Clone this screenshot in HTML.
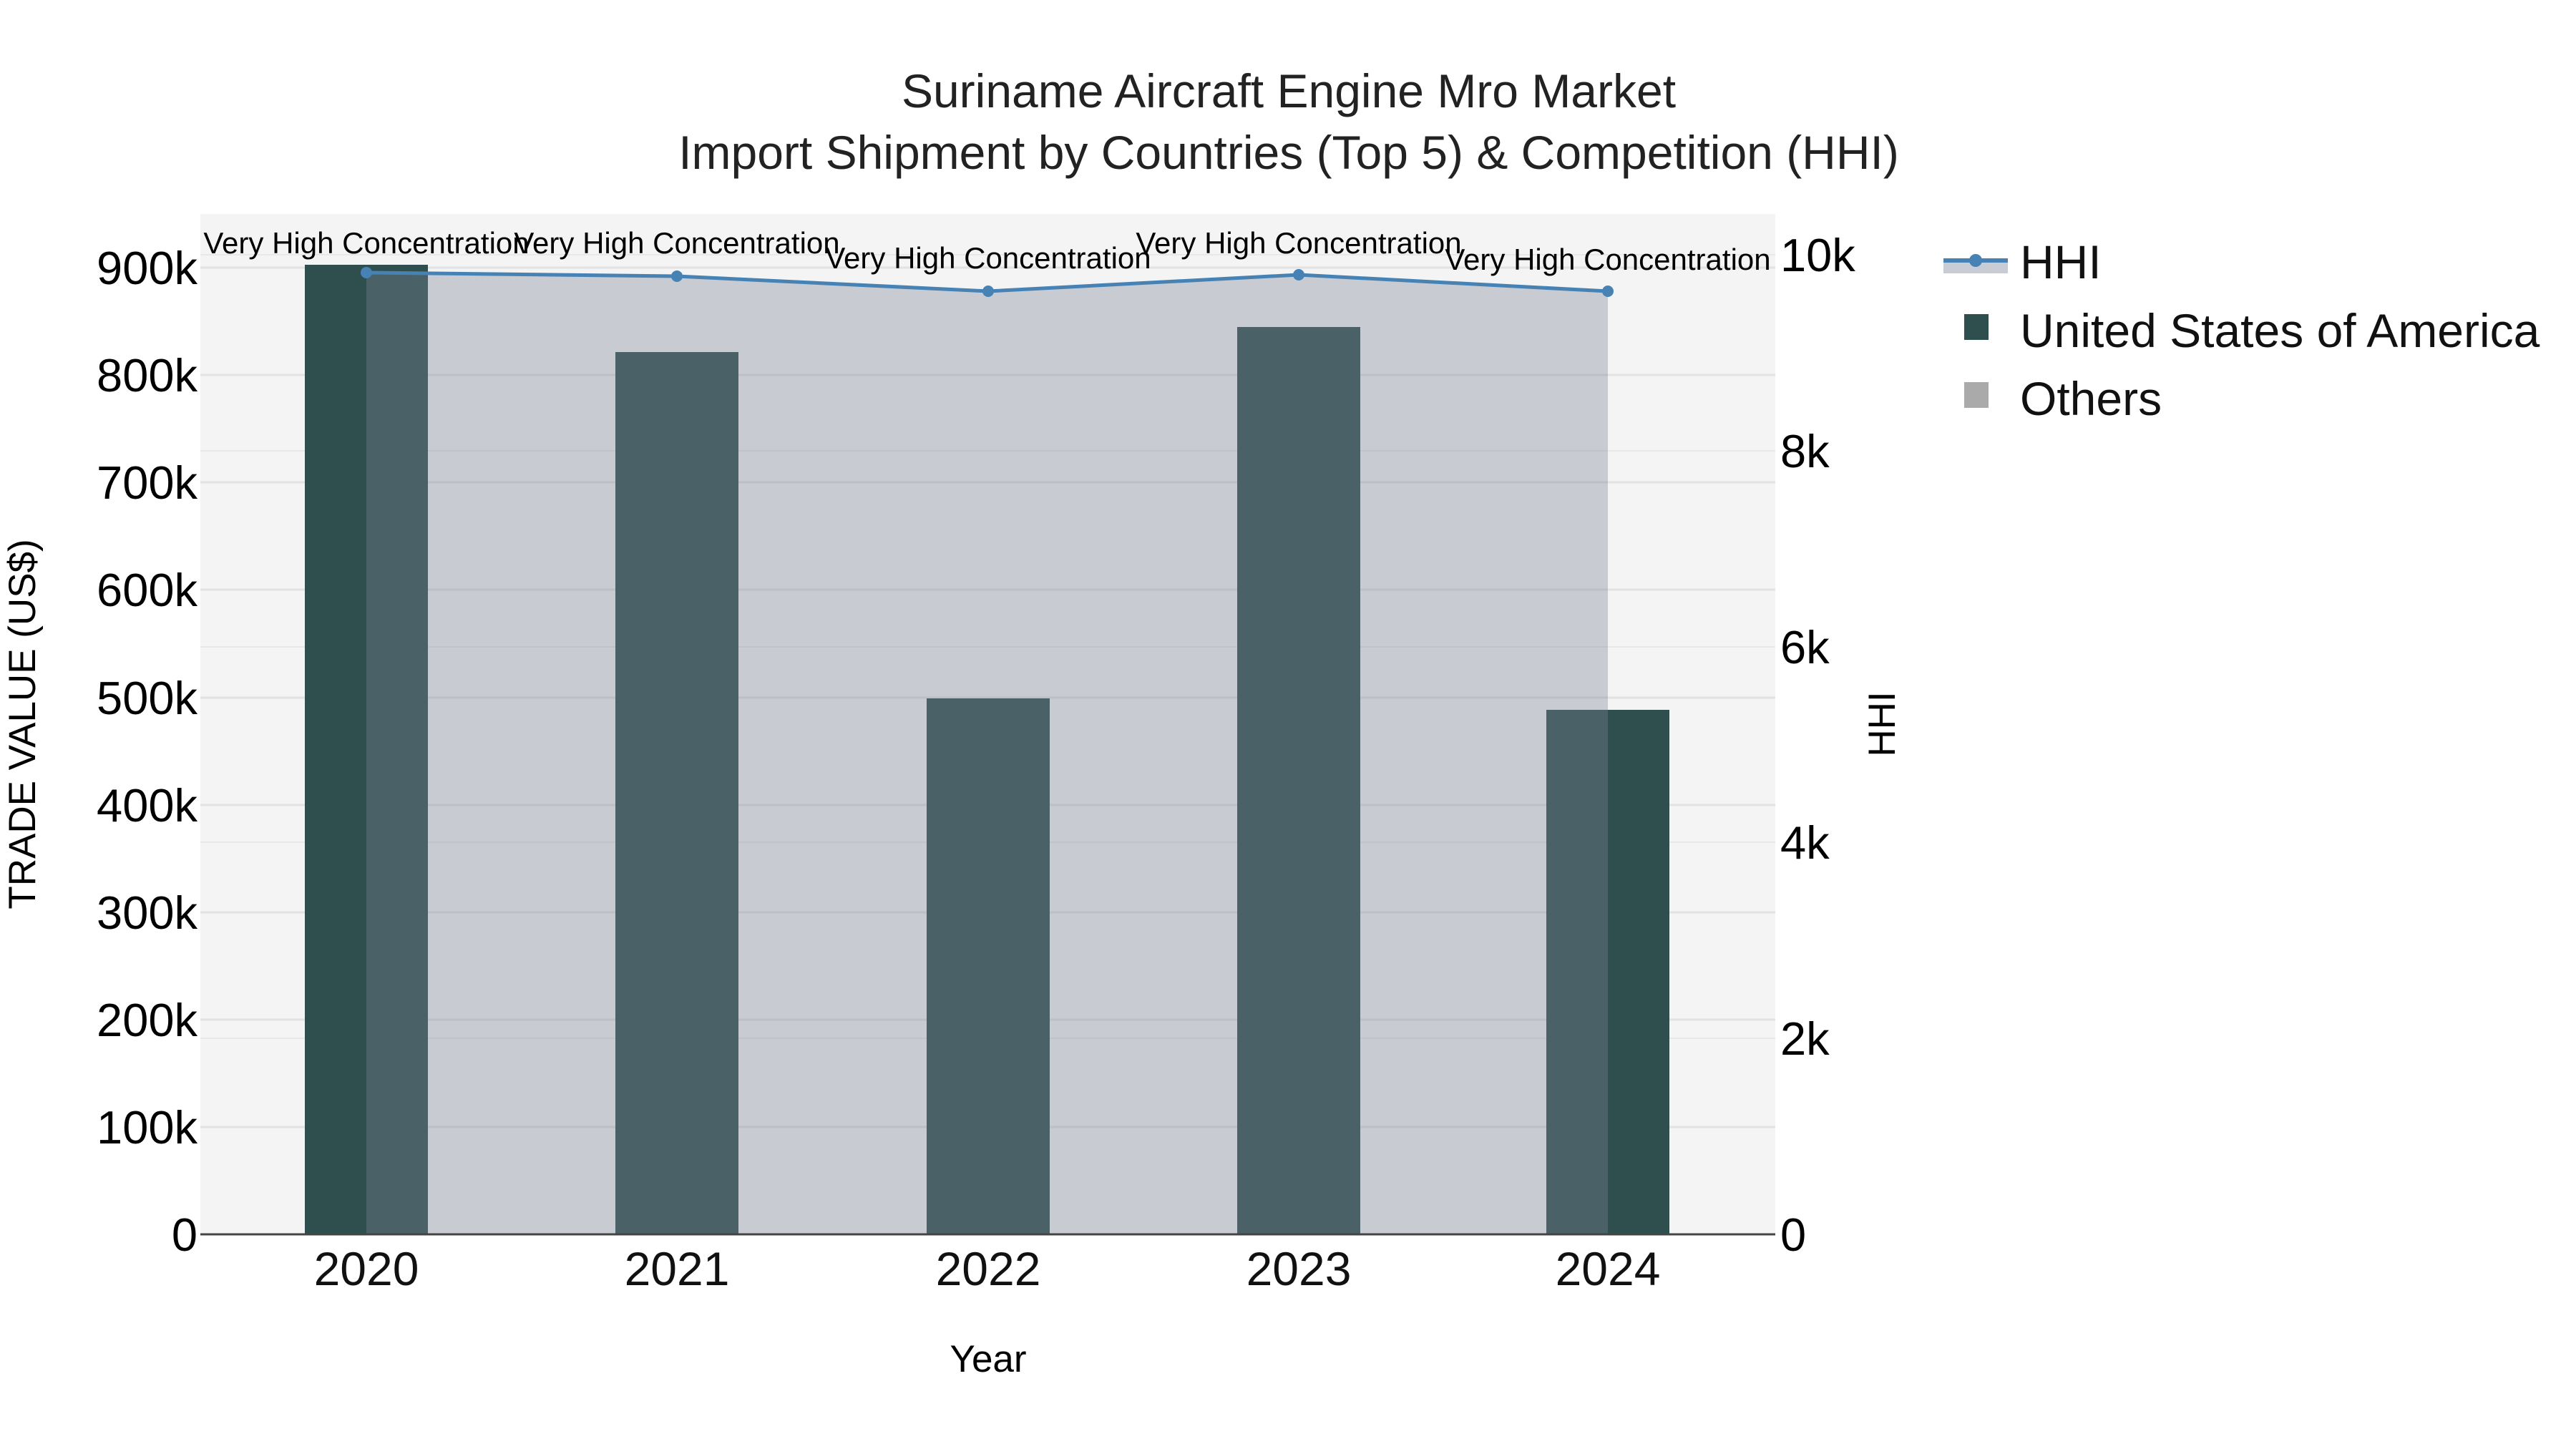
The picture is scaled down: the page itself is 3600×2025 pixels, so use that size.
<!DOCTYPE html>
<html><head><meta charset="utf-8"><style>
html,body{margin:0;padding:0;background:#fff;}
svg{display:block;font-family:"Liberation Sans",sans-serif;}
</style></head><body>
<svg width="3600" height="2025" viewBox="0 0 3600 2025" xmlns="http://www.w3.org/2000/svg">
<rect width="3600" height="2025" fill="#fff"/>
<rect x="280" y="299" width="2201" height="1426" fill="#f4f4f4"/>
<g stroke="#e2e2e2" stroke-width="3">
<line x1="280" x2="2481" y1="1575" y2="1575"/><line x1="280" x2="2481" y1="1425" y2="1425"/>
<line x1="280" x2="2481" y1="1275" y2="1275"/><line x1="280" x2="2481" y1="1125" y2="1125"/>
<line x1="280" x2="2481" y1="975" y2="975"/><line x1="280" x2="2481" y1="824" y2="824"/>
<line x1="280" x2="2481" y1="674" y2="674"/><line x1="280" x2="2481" y1="524" y2="524"/>
<line x1="280" x2="2481" y1="374" y2="374"/>
</g>
<g stroke="#e8e8e8" stroke-width="2">
<line x1="280" x2="2481" y1="1451" y2="1451"/><line x1="280" x2="2481" y1="1177" y2="1177"/>
<line x1="280" x2="2481" y1="904" y2="904"/><line x1="280" x2="2481" y1="630" y2="630"/>
<line x1="280" x2="2481" y1="356" y2="356"/>
</g>
<g fill="#2f4f4f">
<rect x="426" y="370" width="172" height="1355"/>
<rect x="860" y="492" width="172" height="1233"/>
<rect x="1295" y="976" width="172" height="749"/>
<rect x="1729" y="457" width="172" height="1268"/>
<rect x="2161" y="992" width="172" height="733"/>
</g>
<polygon points="512,381 946,386 1381,407 1815,384 2247,407 2247,1725 512,1725" fill="rgba(122,129,151,0.36)"/>
<polyline points="512,381 946,386 1381,407 1815,384 2247,407" fill="none" stroke="#4682b4" stroke-width="5"/>
<g fill="#4682b4">
<circle cx="512" cy="381" r="8"/><circle cx="946" cy="386" r="8"/><circle cx="1381" cy="407" r="8"/><circle cx="1815" cy="384" r="8"/><circle cx="2247" cy="407" r="8"/>
</g>
<line x1="280" x2="2481" y1="1725" y2="1725" stroke="#444" stroke-width="3"/>
<g font-size="42" text-anchor="middle" fill="#000">
<text x="512" y="354">Very High Concentration</text>
<text x="946" y="354">Very High Concentration</text>
<text x="1381" y="375">Very High Concentration</text>
<text x="1815" y="354">Very High Concentration</text>
<text x="2247" y="377">Very High Concentration</text>
</g>
<g font-size="65" text-anchor="end" fill="#000">
<text x="276" y="1748">0</text><text x="276" y="1598">100k</text><text x="276" y="1448">200k</text>
<text x="276" y="1298">300k</text><text x="276" y="1148">400k</text><text x="276" y="998">500k</text>
<text x="276" y="847">600k</text><text x="276" y="697">700k</text><text x="276" y="547">800k</text>
<text x="276" y="397">900k</text>
</g>
<g font-size="65" fill="#000">
<text x="2488" y="1748">0</text><text x="2488" y="1474">2k</text><text x="2488" y="1200">4k</text>
<text x="2488" y="927">6k</text><text x="2488" y="653">8k</text><text x="2488" y="379">10k</text>
</g>
<g font-size="66" text-anchor="middle" fill="#111">
<text x="512" y="1796">2020</text><text x="946" y="1796">2021</text><text x="1381" y="1796">2022</text>
<text x="1815" y="1796">2023</text><text x="2247" y="1796">2024</text>
</g>
<text x="1381" y="1917" font-size="53" text-anchor="middle">Year</text>
<text transform="translate(49,1012) rotate(-90)" font-size="53" text-anchor="middle">TRADE VALUE (US$)</text>
<text transform="translate(2648,1012) rotate(-90)" font-size="53" text-anchor="middle">HHI</text>
<g font-size="66" text-anchor="middle" fill="#222">
<text x="1801" y="150">Suriname Aircraft Engine Mro Market</text>
<text x="1801" y="236">Import Shipment by Countries (Top 5) &amp; Competition (HHI)</text>
</g>
<rect x="2716" y="364" width="90" height="18" fill="#c8cdd5"/>
<line x1="2716" x2="2806" y1="364" y2="364" stroke="#4682b4" stroke-width="6"/>
<circle cx="2761" cy="364" r="9" fill="#4682b4"/>
<rect x="2745" y="439" width="34" height="36" fill="#2f4f4f"/>
<rect x="2745" y="534" width="34" height="36" fill="#aaaaaa"/>
<g font-size="66" fill="#111">
<text x="2823" y="389">HHI</text>
<text x="2823" y="485">United States of America</text>
<text x="2823" y="580">Others</text>
</g>
</svg>
</body></html>
